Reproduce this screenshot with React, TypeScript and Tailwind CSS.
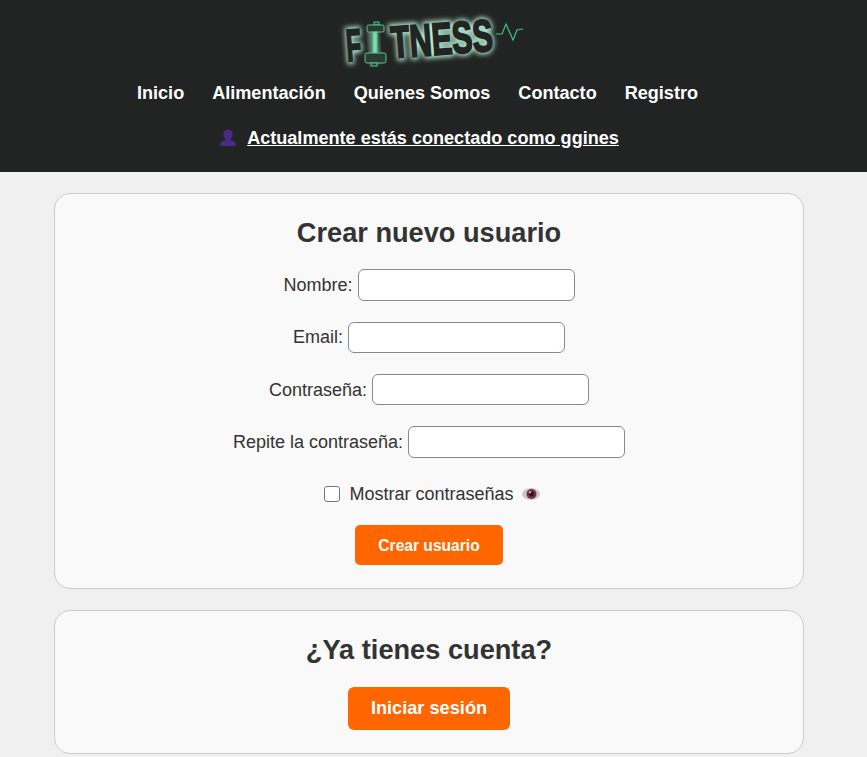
const sans = "font-['Liberation_Sans',Arial,sans-serif]";

const links = ["Inicio", "Alimentación", "Quienes Somos", "Contacto", "Registro"];
const fields = ["Nombre:", "Email:", "Contraseña:", "Repite la contraseña:"];

function Logo() {
  const letters = (
    <>
      <text x="7" y="48" fontSize="45" textLength="15" lengthAdjust="spacingAndGlyphs">
        F
      </text>
      <text x="52" y="48" fontSize="45" textLength="102" lengthAdjust="spacingAndGlyphs">
        TNESS
      </text>
    </>
  );
  return (
    <svg width="188" height="64" viewBox="0 0 188 64" className="block overflow-visible">
      <defs>
        <filter id="glow" x="-20%" y="-50%" width="140%" height="200%">
          <feGaussianBlur stdDeviation="2.600" />
        </filter>
      </defs>
      <g transform="rotate(-4.200 80 48)" fontFamily="'Liberation Sans', Arial, sans-serif" fontWeight="700">
        <g fill="#b4ecd2" stroke="#b4ecd2" strokeWidth="6" filter="url(#glow)">
          {letters}
        </g>
        <rect x="30" y="18" width="10" height="34" fill="#a4e4c8" opacity="0.55" filter="url(#glow)" />
        <g fill="#222423" stroke="#222423" strokeWidth="2">
          {letters}
        </g>
      </g>
      <g fill="#2c3a34" stroke="#4fc890" strokeWidth="1">
        <rect x="34" y="14" width="5" height="3" />
        <rect x="27" y="17" width="17" height="7" rx="1.500" />
        <rect x="33" y="24" width="4" height="21" fill="#7fdcb0" />
        <rect x="25" y="45" width="21" height="10" rx="2" />
        <rect x="31" y="55" width="6" height="3" />
      </g>
      <path d="M156 26 L162 26 L166 16 L173 32 L177 22 L183 21" fill="none" stroke="#3cc48a" strokeWidth="1.200" />
    </svg>
  );
}

function UserIcon() {
  return (
    <svg width="18" height="18" viewBox="0 0 18 18" className="block">
      <path d="M9 .5c3 0 4.500 2 4.500 4.700 0 2.100-.9 3.800-2 4.800v1c2.200.8 4.700 1.700 5.300 3.600.3 1 .1 2.400-.6 2.400H1.800c-.7 0-.9-1.400-.6-2.400.6-1.900 3.100-2.800 5.300-3.600v-1c-1.100-1-2-2.700-2-4.800C4.500 2.500 6 .5 9 .5z" fill="#4b2a86" />
    </svg>
  );
}

function EyeIcon() {
  return (
    <svg width="18" height="14" viewBox="0 0 18 14" className="block">
      <ellipse cx="9" cy="7" rx="9" ry="6" fill="#cfc5d2" />
      <circle cx="9.500" cy="7" r="5" fill="#7a3038" />
      <circle cx="9.500" cy="7" r="2.400" fill="#24161a" />
      <circle cx="8" cy="5.200" r="1" fill="#f0e4e4" />
    </svg>
  );
}

export default function App() {
  return (
    <div className={`${sans} min-h-[757px] overflow-hidden bg-[#f0f0f0] text-[#333]`}>
      <header className="flex h-[172px] flex-col items-center bg-[#222423] pt-2 text-white">
        <Logo />
        <nav className="mt-[9px] flex gap-[28px] pr-[32px] text-[18.080px] font-bold leading-[24px]">
          {links.map((l) => (
            <a key={l}>{l}</a>
          ))}
        </nav>
        <div className="mt-[21px] flex items-center gap-[10px] pr-[29px] text-[18.080px] font-bold leading-[24px]">
          <UserIcon />
          <a className="underline">Actualmente estás conectado como ggines</a>
        </div>
      </header>

      <main className="flex w-[858px] flex-col items-center gap-[21px] pt-[21px]">
        <section className="flex h-[396px] w-[750px] flex-col items-center rounded-[16px] border border-[#ccc] bg-[#f9f9f9] pt-[23px]">
          <h2 className="text-[27.200px] font-bold leading-[32px]">Crear nuevo usuario</h2>
          <div className="mt-[20.200px] flex flex-col items-center gap-[20.900px]">
            {fields.map((f) => (
              <label key={f} className="flex h-[31.500px] items-center gap-[5px] text-lg">
                {f}
                <input type="text" className="h-full w-[217px] rounded-[6px] border border-[#888] bg-white" />
              </label>
            ))}
          </div>
          <label className="mt-[25.800px] ml-[6px] flex h-[20px] items-center text-lg">
            <input type="checkbox" className="h-[16px] w-[16px] appearance-none rounded-[3px] border border-[#767676] bg-white" />
            <span className="ml-[9px]">Mostrar contraseñas</span>
            <span className="ml-[8px]">
              <EyeIcon />
            </span>
          </label>
          <button className="mt-[21.600px] h-[40px] w-[148px] rounded-[5px] bg-[#ff6600] text-[15.600px] font-bold text-white">
            Crear usuario
          </button>
        </section>

        <section className="flex h-[144px] w-[750px] flex-col items-center rounded-[16px] border border-[#ccc] bg-[#f9f9f9] pt-[23px]">
          <h2 className="text-[27.200px] font-bold leading-[32px]">¿Ya tienes cuenta?</h2>
          <button className="mt-[21px] h-[43px] w-[162px] rounded-[6px] bg-[#ff6600] text-[18.200px] font-bold text-white">Iniciar sesión</button>
        </section>
      </main>
    </div>
  );
}
